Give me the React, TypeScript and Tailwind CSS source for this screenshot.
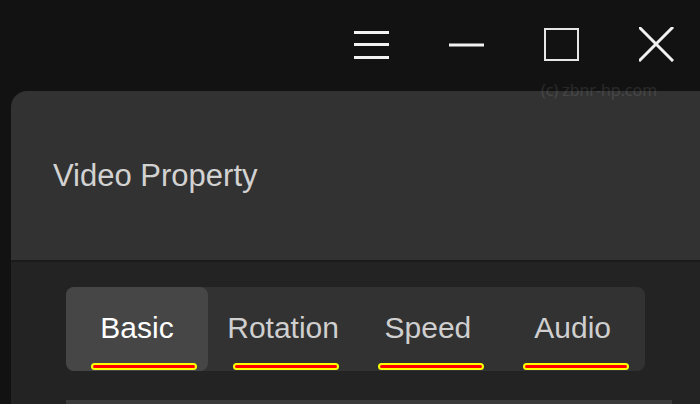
const tabs = ["Basic", "Rotation", "Speed", "Audio"]

export default function App() {
  return (
    <div className="relative w-[700px] h-[404px] overflow-hidden bg-[#121212] font-['Liberation_Sans',Arial,sans-serif]">
      {/* title bar */}
      <div className="h-[91px] flex items-center justify-end gap-[60px] pr-[26px] pb-[2px]">
        <svg width="35" height="35" viewBox="0 0 35 35" className="text-[#f2f2f2]">
          <g stroke="currentColor" strokeWidth="3">
            <line x1="0" y1="5.5" x2="35" y2="5.5" />
            <line x1="0" y1="17.5" x2="35" y2="17.5" />
            <line x1="0" y1="30.5" x2="35" y2="30.5" />
          </g>
        </svg>
        <svg width="35" height="35" viewBox="0 0 35 35" className="text-[#f2f2f2]">
          <line x1="0" y1="18" x2="35" y2="18" stroke="currentColor" strokeWidth="3" />
        </svg>
        <svg width="35" height="35" viewBox="0 0 35 35" className="text-[#e6e6e6]">
          <rect x="1" y="2" width="33" height="31" fill="none" stroke="currentColor" strokeWidth="2" />
        </svg>
        <svg width="35" height="35" viewBox="0 0 35 35" className="text-[#f2f2f2]">
          <g stroke="currentColor" strokeWidth="3" strokeLinecap="square">
            <line x1="1" y1="1" x2="33" y2="33" />
            <line x1="33" y1="1" x2="1" y2="33" />
          </g>
        </svg>
      </div>

      {/* panel */}
      <div className="ml-[11px] rounded-tl-[16px] bg-[#323232] overflow-hidden">
        <div className="h-[169px] flex items-center pl-[42px]">
          <span className="text-[31px] text-[#d2d2d2] mt-[1px]">Video Property</span>
        </div>
        <div className="border-t-2 border-[#1b1b1b] bg-[#232323] h-[200px] pt-[25px] pl-[55px]">
          <div className="w-[579px] h-[84px] rounded-[8px] bg-[#323232] grid grid-cols-4">
            {tabs.map((t, i) => (
              <div
                key={t}
                className={
                  i === 0
                    ? "relative flex items-center justify-center rounded-[8px] bg-[#464646] w-[142px] text-white"
                    : "relative flex items-center justify-center text-[#cfcfcf]"
                }
              >
                <span className="text-[30px] leading-none -mt-[2px]">{t}</span>
                <div
                  className={
                    i === 0
                      ? "absolute bottom-[1px] left-1/2 -translate-x-1/2 ml-[7px] w-[106px] h-[7px] rounded-full bg-[#ff0000] border-2 border-[#ffff00]"
                      : "absolute bottom-[1px] left-1/2 -translate-x-1/2 ml-[3px] w-[106px] h-[7px] rounded-full bg-[#ff0000] border-2 border-[#ffff00]"
                  }
                />
              </div>
            ))}
          </div>
          <div className="mt-[29px] w-[606px] h-[4px] bg-[#3a3a3a]" />
        </div>
      </div>

      {/* watermark */}
      <span className="absolute left-[541px] top-[78px] text-[16px] text-white/[0.1] font-['Open_Sans',sans-serif]">
        (c) zbnr-hp.com
      </span>
    </div>
  )
}
